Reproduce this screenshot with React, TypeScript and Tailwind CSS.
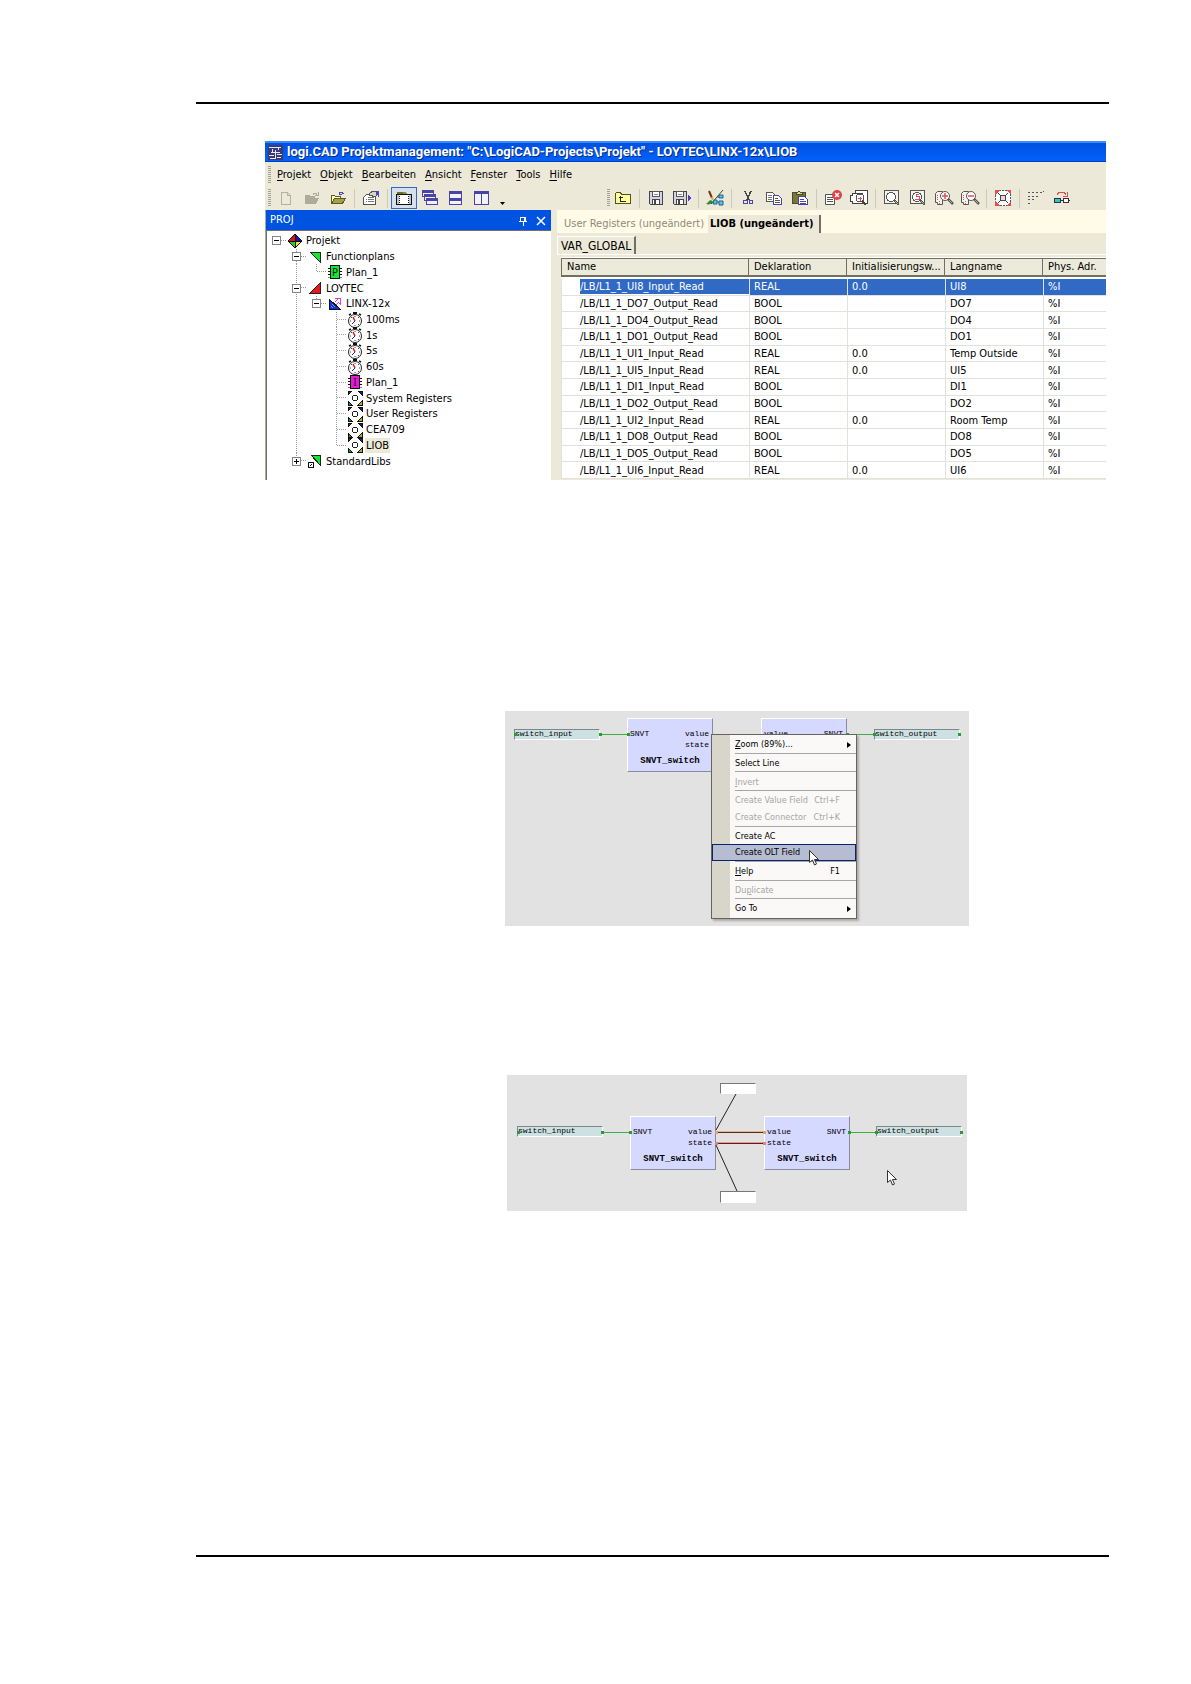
import type { ReactNode } from 'react';
import clsx from 'clsx';

const UI_FONT = "font-['DejaVu_Sans_Condensed','DejaVu_Sans',sans-serif]";
const MONO_FONT = "font-['Liberation_Mono',monospace]";

/* ---------- toolbar icons ---------- */

const Icon = ({ children, className }: { children: ReactNode; className?: string }) => (
  <svg viewBox="0 0 16 16" className={clsx('h-4 w-4 shrink-0', className)} fill="none" shapeRendering="crispEdges">
    {children}
  </svg>
);

const NewIcon = () => (
  <Icon>
    <path d="M3.5 2.5h6l3 3v9h-9z M9.5 2.5v3h3" stroke="#b4b1a3" />
  </Icon>
);

const OpenGrayIcon = () => (
  <Icon>
    <path d="M1 5h4l1 1h5v2h4l-3 6H1z" fill="#aeab9d" />
    <path d="M9 4.5c1-2 3-2 4 0M14 2v3h-3" stroke="#aeab9d" />
  </Icon>
);

const OpenIcon = () => (
  <Icon>
    <path d="M1.5 13.5v-8h3l1 1h5v2" fill="#ffffc0" stroke="#5c5a20" />
    <path d="M1.5 13.5l3-5h11l-3 5z" fill="#a2a04a" stroke="#5c5a20" />
    <path d="M13.5 4c-1-2-3-2-4 0M9 2v2h3" stroke="#4a45a8" />
  </Icon>
);

const PropertiesIcon = () => (
  <Icon>
    <path d="M.5 7.5l3-3h9v10h-12z" fill="#fff" stroke="#555" />
    <path d="M5 7.5h6M3 9.5h1M5 9.5h6M3 11.5h1M5 11.5h6" stroke="#777" />
    <path d="M6 4l4-3h3v5l-3 1-1-2-3 1z" fill="#d8d5c8" stroke="#555" />
    <path d="M13 1h3v6h-1V5h-2z" fill="#4a45b0" />
  </Icon>
);

const ProjectPaneIcon = () => (
  <Icon>
    <path d="M1 2h5l1 1v2H1z" fill="#6b7018" />
    <path d="M7 2l2 0 2 2h4v2H7z" fill="#8a8d40" />
    <rect x="0" y="4" width="16" height="11" fill="#111" />
    <rect x="1" y="5" width="2" height="9" fill="#b9c4cd" />
    <rect x="4" y="5" width="8" height="9" fill="#fff" />
    <rect x="13" y="5" width="2" height="9" fill="#b9c4cd" />
    <path d="M3.5 5v9M12.5 5v9" stroke="#fff" strokeDasharray="1 1" />
  </Icon>
);

const CascadeIcon = () => (
  <Icon>
    {[
      [0, 0],
      [2, 4],
      [4, 8],
    ].map(([x, y]) => (
      <g key={x}>
        <rect x={x + 0.5} y={y + 0.5} width="11" height="6" fill="#f0f0fa" stroke="#4845a5" />
        <rect x={x} y={y} width="12" height="3" fill="#4845a5" />
      </g>
    ))}
  </Icon>
);

const TileRowsIcon = () => (
  <Icon>
    <rect x="1.5" y="1.5" width="12" height="13" fill="#f2f2fa" stroke="#4845a5" />
    <path d="M1 1h13v3H1zM1 8h13v3H1z" fill="#4845a5" />
  </Icon>
);

const TileColumnsIcon = () => (
  <Icon>
    <rect x=".5" y="1.5" width="14" height="13" fill="#f2f2fa" stroke="#4845a5" />
    <path d="M0 1h15v3H0zM7 1h1v14H7z" fill="#4845a5" />
  </Icon>
);

const FolderUpIcon = () => (
  <Icon>
    <path d="M.5 13.5v-10l1-1h4l1 2h9v9z" fill="#ffff9c" stroke="#55531c" />
    <path d="M5.5 6v5h5M3.5 7.5h4" stroke="#222" />
  </Icon>
);

const Floppy = () => (
  <>
    <path d="M1.5 1.5h13v13h-12l-1-1z" fill="#d6d4e4" stroke="#444" />
    <rect x="4.5" y="1.5" width="7" height="5" fill="#fff" stroke="#555" />
    <rect x="4.5" y="9.5" width="7" height="5" fill="#fff" stroke="#444" />
    <rect x="6" y="10" width="2" height="4" fill="#444" />
    <path d="M6 4.5h4" stroke="#888" />
  </>
);

const SaveIcon = () => (
  <Icon>
    <Floppy />
  </Icon>
);

const SaveAsIcon = () => (
  <svg viewBox="0 0 20 16" className="h-4 w-5" fill="none" shapeRendering="crispEdges">
    <Floppy />
    <path d="M16 5l4 3-4 3z" fill="#4a3fc0" />
  </svg>
);

const DrawIcon = () => (
  <svg viewBox="0 0 18 16" className="h-4 w-[18px]" fill="none">
    <path d="M3 1l3 7" stroke="#8a2a1a" strokeWidth="2" />
    <path d="M6 7l1 3" stroke="#c8c020" strokeWidth="2" />
    <path d="M0 14c2-1 3-4 5-4l2 2c-2 2-4 3-7 2z" fill="#2f8a3a" />
    <path d="M17 0L5 14" stroke="#444" />
    <path d="M8 10h3v4H7zM13 5h4v3h-4zM13 11h4v4h-4z" fill="#58c6ea" stroke="#20608a" />
    <path d="M11 12h2M11 7h2" stroke="#20608a" />
  </svg>
);

const CutIcon = () => (
  <Icon>
    <path d="M5 1l4 9M11 1L7 10" stroke="#444" strokeWidth="1.5" />
    <circle cx="5.5" cy="12" r="2" stroke="#4a45a8" />
    <circle cx="11" cy="12" r="2" stroke="#4a45a8" />
  </Icon>
);

const CopyIcon = () => (
  <Icon>
    <path d="M.5 2.5h6l2 2v7h-8z" fill="#fff" stroke="#555" />
    <path d="M2 5.5h4M2 7.5h4M2 9.5h4" stroke="#777" />
    <path d="M7.5 5.5h5l3 3v6h-8z" fill="#fff" stroke="#4a45a8" />
    <path d="M9 8.5h3M9 10.5h5M9 12.5h5" stroke="#555" />
  </Icon>
);

const PasteIcon = () => (
  <Icon>
    <rect x=".5" y="2.5" width="13" height="11" fill="#77753c" stroke="#4b4a2a" />
    <path d="M4 4V2h2l1-1 1 1h2v2z" fill="#e8e070" stroke="#444" />
    <path d="M6.5 6.5h6l3 3v5h-9z" fill="#fff" stroke="#4a45a8" />
    <path d="M8 9.5h4M8 11.5h6M8 13h6" stroke="#4a45a8" />
  </Icon>
);

const DeleteEntryIcon = () => (
  <svg viewBox="0 0 18 16" className="h-4 w-[18px]" fill="none">
    <path d="M1.5 4.5h9v10h-9z" fill="#fff" stroke="#555" />
    <path d="M3 7.5h6M3 9.5h6M3 11.5h6" stroke="#555" />
    <circle cx="13" cy="5" r="5" fill="#e04048" />
    <path d="M11 3l4 4M15 3l-4 4" stroke="#fff" strokeWidth="1.5" />
  </svg>
);

const PreviewIcon = () => (
  <svg viewBox="0 0 18 16" className="h-4 w-[18px]" fill="none" shapeRendering="crispEdges">
    <path d="M5.5 3.5v-3h12v13h-3" fill="#fff" stroke="#444" />
    <path d="M2.5 3.5h10v10h-10v-2h-2v-6h2z" fill="#fff" stroke="#444" />
    <circle cx="10" cy="8" r="4" fill="#fff" stroke="#555" />
    <path d="M8 8.5h4M10 6.5v4" stroke="#e05058" />
    <path d="M12 11l4 4" stroke="#444" strokeWidth="2" />
  </svg>
);

const Lens = ({ cx, cy }: { cx: number; cy: number }) => (
  <>
    <circle cx={cx} cy={cy} r="4.5" fill="#fff" stroke="#555" />
    <path d={`M${cx + 3} ${cy + 3}l5 5`} stroke="#555" strokeWidth="2.5" />
    <path d={`M${cx + 4} ${cy + 4}l3 3`} stroke="#aaa" />
  </>
);

const ZoomWindowIcon = () => (
  <Icon>
    <path d="M.5.5h14v13H.5z" fill="#f4f3ec" stroke="#555" />
    <Lens cx={7} cy={7} />
  </Icon>
);

const ZoomSelectionIcon = () => (
  <Icon>
    <path d="M.5.5h14v13H.5z" fill="#f4f3ec" stroke="#555" />
    <Lens cx={7} cy={7} />
    <path d="M9 4.5H6v2h3v3H5" stroke="#e05058" />
  </Icon>
);

const ZoomPage = () => (
  <>
    <path d="M.5 3.5l2-2h5v13h-5v-2h-2z" fill="#f4f3ec" stroke="#555" />
    <path d="M2.5 5v6M4.5 11v3" stroke="#e05058" strokeDasharray="1 1" />
  </>
);

const ZoomInIcon = () => (
  <svg viewBox="0 0 19 16" className="h-4 w-[19px]" fill="none">
    <ZoomPage />
    <Lens cx={10} cy={6} />
    <path d="M7 6h6M10 3v6" stroke="#e05058" strokeWidth="1.5" />
  </svg>
);

const ZoomOutIcon = () => (
  <svg viewBox="0 0 19 16" className="h-4 w-[19px]" fill="none">
    <ZoomPage />
    <Lens cx={10} cy={6} />
    <path d="M7 6h6" stroke="#e05058" strokeWidth="1.5" />
  </svg>
);

const FitIcon = () => (
  <Icon>
    <rect x=".5" y=".5" width="15" height="15" fill="#fff" stroke="#555" strokeDasharray="2 1" />
    <path d="M0 0h5L0 5zM16 0v5l-5-5zM0 16v-5l5 5zM16 16h-5l5-5z" fill="#e05058" />
    <rect x="5.5" y="5.5" width="5" height="5" fill="#e8d8d8" stroke="#444" />
    <path d="M3 3l2 2M13 3l-2 2M3 13l2-2M13 13l-2-2" stroke="#444" />
  </Icon>
);

const GridDotsIcon = () => (
  <Icon>
    <path
      d="M0 2h2v1H0zM4 2h2v1H4zM8 2h2v1H8zM12 2h2v1h-2zM15 1h1v1h-1zM0 6h2v1H0zM4 6h2v1H4zM8 6h2v1H8zM0 9h2v1H0zM4 9h2v1H4zM0 13h2v1H0z"
      fill="#555"
    />
  </Icon>
);

const RelinkIcon = () => (
  <Icon>
    <path d="M3 5c2-4 7-4 9 0M13 2v4H9" stroke="#e05058" />
    <rect x=".5" y="8.5" width="6" height="4" fill="#28c8d0" stroke="#333" />
    <rect x="9.5" y="8.5" width="5" height="4" fill="#fff" stroke="#333" />
    <path d="M7 10.5h2M15 10.5h1" stroke="#333" />
  </Icon>
);

/* ---------- toolbar ---------- */

interface ToolButton {
  label: string;
  icon: ReactNode;
  active?: boolean;
}

const fileTools: ToolButton[][] = [
  [
    { label: 'New', icon: <NewIcon /> },
    { label: 'Open', icon: <OpenGrayIcon /> },
    { label: 'Open project', icon: <OpenIcon /> },
  ],
  [{ label: 'Properties', icon: <PropertiesIcon /> }],
  [
    { label: 'Project pane', icon: <ProjectPaneIcon />, active: true },
    { label: 'Cascade', icon: <CascadeIcon /> },
    { label: 'Tile rows', icon: <TileRowsIcon /> },
    { label: 'Tile columns', icon: <TileColumnsIcon /> },
  ],
];

const editTools: ToolButton[][] = [
  [{ label: 'Up', icon: <FolderUpIcon /> }],
  [
    { label: 'Save', icon: <SaveIcon /> },
    { label: 'Save as', icon: <SaveAsIcon /> },
  ],
  [{ label: 'Draw', icon: <DrawIcon /> }],
  [
    { label: 'Cut', icon: <CutIcon /> },
    { label: 'Copy', icon: <CopyIcon /> },
    { label: 'Paste', icon: <PasteIcon /> },
  ],
  [
    { label: 'Delete entry', icon: <DeleteEntryIcon /> },
    { label: 'Preview', icon: <PreviewIcon /> },
  ],
  [
    { label: 'Zoom window', icon: <ZoomWindowIcon /> },
    { label: 'Zoom selection', icon: <ZoomSelectionIcon /> },
    { label: 'Zoom in', icon: <ZoomInIcon /> },
    { label: 'Zoom out', icon: <ZoomOutIcon /> },
  ],
  [{ label: 'Fit', icon: <FitIcon /> }],
  [
    { label: 'Grid', icon: <GridDotsIcon /> },
    { label: 'Relink', icon: <RelinkIcon /> },
  ],
];

const Grip = () => (
  <svg className="h-[18px] w-[3px] shrink-0" shapeRendering="crispEdges">
    <path d="M1.5 0v18" stroke="#a5a294" strokeWidth="3" strokeDasharray="1 1" />
  </svg>
);

const ToolGroups = ({ groups }: { groups: ToolButton[][] }) => (
  <div className="flex items-center">
    {groups.map((group, i) => (
      <div key={i} className="flex items-center">
        {i > 0 && <span className="mx-[3px] h-[19px] w-px bg-[#cdcab9]" />}
        {group.map((tool) => (
          <button
            key={tool.label}
            aria-label={tool.label}
            className={clsx(
              'flex h-[22px] w-[26px] items-center justify-center',
              tool.active && 'border border-[#316ac5] bg-[#d5e0ec]'
            )}
          >
            {tool.icon}
          </button>
        ))}
      </div>
    ))}
  </div>
);

/* ---------- project tree ---------- */

const DiamondIcon = () => (
  <Icon>
    <path d="M8 1v7H1z" fill="#e01010" />
    <path d="M8 1v7h7z" fill="#1010c8" />
    <path d="M8 15V8H1z" fill="#20d020" />
    <path d="M8 15V8h7z" fill="#f0e820" />
    <path d="M8 1l7 7-7 7-7-7zM8 1v14M1 8h14" stroke="#111" />
  </Icon>
);

const GreenFlagIcon = () => (
  <Icon>
    <path d="M3 3h10v10z" fill="#12e832" stroke="#222" />
  </Icon>
);

const RedFlagIcon = () => (
  <Icon>
    <path d="M13 3v10H3z" fill="#e81818" stroke="#222" />
  </Icon>
);

const DeviceIcon = () => (
  <Icon>
    <path d="M2 3v10h11z" fill="#1030d8" stroke="#111" />
    <path d="M7.5 2.5h6v6l-2-2-3 3M11 3l-3 3" stroke="#e040d0" />
    <path d="M5 8l3 3M4 10l2 2" stroke="#6f9cff" />
  </Icon>
);

const ClockIcon = () => (
  <svg viewBox="0 0 16 16" className="h-4 w-4 shrink-0" fill="none">
    <circle cx="8" cy="9" r="6.5" fill="#fff" stroke="#222" />
    <path d="M6 0h4v2H6z" fill="#111" />
    <path d="M2 3l2-1M14 3l-2-1" stroke="#111" strokeWidth="1.5" />
    <path d="M8 4v1M8 13v1M3 9h1M12 9h1M5 6l-1-1M11 6l1-1M11 12l1 1" stroke="#444" />
    <path d="M8 9L6 5" stroke="#d02020" strokeWidth="1.5" />
    <path d="M8 9l-3 3" stroke="#2020c0" />
  </svg>
);

const ChipIcon = ({ letter, fill }: { letter: string; fill: string }) => (
  <Icon>
    <path d="M1 4.5h14M1 7.5h14M1 10.5h14" stroke="#111" />
    <path d="M1 13.5h14" stroke="#888" />
    <rect x="3.5" y="1.5" width="9" height="13" fill={fill} stroke="#111" />
    <text x="8" y="12" textAnchor="middle" fontSize="10" fontFamily="Noto Sans, sans-serif" fill="#111">
      {letter}
    </text>
  </Icon>
);

const RegisterIcon = () => (
  <Icon>
    <path d="M1 1h4L1 5z" fill="#a01818" stroke="#111" />
    <path d="M11 1h4v4z" fill="#1818a0" stroke="#111" />
    <path d="M1 11v4h4z" fill="#18a018" stroke="#111" />
    <path d="M11 15h4v-4z" fill="#b0b018" stroke="#111" />
    <path d="M6.5 5.5h3l1 1v3l-1 1h-3l-1-1v-3z" stroke="#222" />
  </Icon>
);

const LibIcon = () => (
  <Icon>
    <path d="M4 2h9v10z" fill="#12e832" stroke="#222" />
    <rect x="1.5" y="9.5" width="5" height="5" fill="#fff" stroke="#111" />
    <path d="M3 13l2-2" stroke="#111" />
  </Icon>
);

// guides: one character per column; "|" runs through, "+" branches, "L" ends, "-" only leads to the icon
interface TreeNode {
  label: string;
  icon: ReactNode;
  guides: string;
  box?: '+' | '−';
  selected?: boolean;
}

const treeNodes: TreeNode[] = [
  { label: 'Projekt', icon: <DiamondIcon />, guides: '-', box: '−' },
  { label: 'Functionplans', icon: <GreenFlagIcon />, guides: ' +', box: '−' },
  { label: 'Plan_1', icon: <ChipIcon letter="P" fill="#12e832" />, guides: ' |L' },
  { label: 'LOYTEC', icon: <RedFlagIcon />, guides: ' +', box: '−' },
  { label: 'LINX-12x', icon: <DeviceIcon />, guides: ' |L', box: '−' },
  { label: '100ms', icon: <ClockIcon />, guides: ' | +' },
  { label: '1s', icon: <ClockIcon />, guides: ' | +' },
  { label: '5s', icon: <ClockIcon />, guides: ' | +' },
  { label: '60s', icon: <ClockIcon />, guides: ' | +' },
  { label: 'Plan_1', icon: <ChipIcon letter="I" fill="#e818d8" />, guides: ' | +' },
  { label: 'System Registers', icon: <RegisterIcon />, guides: ' | +' },
  { label: 'User Registers', icon: <RegisterIcon />, guides: ' | +' },
  { label: 'CEA709', icon: <RegisterIcon />, guides: ' | +' },
  { label: 'LIOB', icon: <RegisterIcon />, guides: ' | L', selected: true },
  { label: 'StandardLibs', icon: <LibIcon />, guides: ' L', box: '+' },
];

const Guide = ({ kind }: { kind: string }) => (
  <svg className="h-full w-5" stroke="#9a9a9a" strokeDasharray="1 1" shapeRendering="crispEdges">
    {'|+L'.includes(kind) && <line x1="9.5" y1="0" x2="9.5" y2="50%" />}
    {'|+'.includes(kind) && <line x1="9.5" y1="50%" x2="9.5" y2="100%" />}
    {'+L-'.includes(kind) && <line x1="10" y1="50%" x2="20" y2="50%" />}
  </svg>
);

const ProjectTree = () => (
  <ul className="grid h-[236px] auto-rows-fr">
    {treeNodes.map((node, i) => (
      <li key={i} className="flex min-h-0 items-center">
        {node.guides.split('').map((kind, col) => (
          <span key={col} className="relative h-full w-5">
            {kind !== ' ' && <Guide kind={kind} />}
            {node.box && col === node.guides.length - 1 && (
              <button
                aria-label={`Toggle ${node.label}`}
                className="absolute inset-y-0 left-[5px] my-auto flex h-[9px] w-[9px] items-center justify-center border border-[#848484] bg-white"
              >
                <span className="h-px w-[5px] bg-black" />
                {node.box === '+' && <span className="absolute h-[5px] w-px bg-black" />}
              </button>
            )}
          </span>
        ))}
        {node.icon}
        <button className={clsx('ml-0.5 px-px leading-[15px]', node.selected && 'bg-[#ece9d8]')}>{node.label}</button>
      </li>
    ))}
  </ul>
);

const ProjectPane = () => (
  <div className="flex w-[286px] shrink-0 flex-col border-l border-[#aca899]">
    <div className="flex h-5 items-center bg-[#0053e1] pt-px pl-1 text-white">
      <span className="flex-1">PROJ</span>
      <button aria-label="Pin" className="mr-2">
        <svg viewBox="0 0 10 10" className="h-[10px] w-[10px]" stroke="#fff" fill="none" shapeRendering="crispEdges">
          <path d="M2.5 1v4M6.5 1v4M7.5 1v4M2 1.5h6M1 5.5h8M5 6v4" />
        </svg>
      </button>
      <button aria-label="Close" className="mr-[5px]">
        <svg viewBox="0 0 10 10" className="h-[10px] w-[10px]" stroke="#fff" strokeWidth="1.5">
          <path d="M1 1l8 8M9 1L1 9" />
        </svg>
      </button>
    </div>
    <div className="flex-1 overflow-hidden border-t border-l border-[#716f64] bg-white pt-0.5">
      <ProjectTree />
    </div>
  </div>
);

/* ---------- register table ---------- */

const columns = ['Name', 'Deklaration', 'Initialisierungsw...', 'Langname', 'Phys. Adr.'];

const rows = [
  ['/LB/L1_1_UI8_Input_Read', 'REAL', '0.0', 'UI8', '%I'],
  ['/LB/L1_1_DO7_Output_Read', 'BOOL', '', 'DO7', '%I'],
  ['/LB/L1_1_DO4_Output_Read', 'BOOL', '', 'DO4', '%I'],
  ['/LB/L1_1_DO1_Output_Read', 'BOOL', '', 'DO1', '%I'],
  ['/LB/L1_1_UI1_Input_Read', 'REAL', '0.0', 'Temp Outside', '%I'],
  ['/LB/L1_1_UI5_Input_Read', 'REAL', '0.0', 'UI5', '%I'],
  ['/LB/L1_1_DI1_Input_Read', 'BOOL', '', 'DI1', '%I'],
  ['/LB/L1_1_DO2_Output_Read', 'BOOL', '', 'DO2', '%I'],
  ['/LB/L1_1_UI2_Input_Read', 'REAL', '0.0', 'Room Temp', '%I'],
  ['/LB/L1_1_DO8_Output_Read', 'BOOL', '', 'DO8', '%I'],
  ['/LB/L1_1_DO5_Output_Read', 'BOOL', '', 'DO5', '%I'],
  ['/LB/L1_1_UI6_Input_Read', 'REAL', '0.0', 'UI6', '%I'],
];

const RegisterTable = () => (
  <table className="h-[222px] w-full table-fixed border-separate border-spacing-0 bg-white text-left whitespace-nowrap">
    <colgroup>
      <col className="w-[188px]" />
      <col className="w-[98px]" />
      <col className="w-[98px]" />
      <col className="w-[98px]" />
      <col />
    </colgroup>
    <thead>
      <tr className="h-[22px]">
        {columns.map((column) => (
          <th key={column} className="group p-0 pb-0.5 font-normal">
            <div className="border-t border-r border-b-2 border-[#716f64] bg-[#ebeadb] pl-[5px] leading-[16px] group-first:border-l group-last:border-r-0">
              {column}
            </div>
          </th>
        ))}
      </tr>
    </thead>
    <tbody>
      {rows.map((row, r) => (
        <tr key={row[0]}>
          {row.map((cell, c) => (
            <td
              key={c}
              className={clsx(
                'border-b border-l border-[#e2e1dc] p-0 leading-[15px]',
                c === 0 ? 'pl-[18px]' : 'pl-1',
                r === 0 && c > 0 && 'bg-[#316ac5] text-white'
              )}
            >
              {r === 0 && c === 0 ? <span className="block bg-[#316ac5] text-white">{cell}</span> : cell}
            </td>
          ))}
        </tr>
      ))}
    </tbody>
  </table>
);

const EditorPane = () => (
  <div className="flex min-w-0 flex-1 flex-col pl-[6px]">
    <div className="flex h-[23px] items-end bg-[#fffbe6] pl-[7px]">
      <button className="h-[18px] pt-px pr-1 text-[#8d8a7c]">User Registers (ungeändert)</button>
      <button className="h-[18px] border-r-2 border-[#716f64] bg-[#ece9d8] pt-px pr-1.5 pl-0.5 font-bold">
        LIOB (ungeändert)
      </button>
    </div>
    <div className="flex h-[22px] items-end border-b border-white">
      <button className="h-[18px] border-t border-r-2 border-l border-t-white border-r-[#716f64] border-l-white px-[3px] pt-px text-xs leading-[16px]">
        VAR_GLOBAL
      </button>
    </div>
    <div className="mt-0.5 ml-1">
      <RegisterTable />
    </div>
  </div>
);

const menus = ['Projekt', 'Objekt', 'Bearbeiten', 'Ansicht', 'Fenster', 'Tools', 'Hilfe'];

const LogiCadWindow = () => (
  <section className={clsx('mt-[37px] mr-[3px] ml-[69px] h-[339px] overflow-hidden bg-[#ece9d8] text-[11px] text-black', UI_FONT)}>
    <header className="flex h-[21px] items-center gap-1 border-t-2 border-b border-t-[#3a8bff] border-b-[#0040c0] bg-linear-to-b from-[#0050e0] to-[#0062fa] pl-[3px]">
      <svg viewBox="0 0 15 15" className="h-[15px] w-[15px]" fill="none" shapeRendering="crispEdges">
        <rect width="15" height="15" fill="#3b3a78" />
        <path d="M1 2.5h12M4 4v3M10 3v2M3 7.5h9M7 5v8M9 9.5h5M9 12.5h4M1 10.5h5M2 13.5h6" stroke="#e8e8f4" />
      </svg>
      <h1 className="font-['Roboto',sans-serif] text-[13px] leading-[18px] font-bold whitespace-nowrap text-white [text-shadow:1px_1px_#0a2a80]">
        logi.CAD Projektmanagement: "C:\LogiCAD-Projects\Projekt" - LOYTEC\LINX-12x\LIOB
      </h1>
    </header>
    <nav className="flex h-6 items-center pt-0.5 pl-[3px]">
      <Grip />
      <div className="ml-1.5 flex gap-[9px]">
        {menus.map((menu) => (
          <button key={menu}>
            <span className="underline underline-offset-2">{menu[0]}</span>
            {menu.slice(1)}
          </button>
        ))}
      </div>
    </nav>
    <div className="flex h-6 items-center pl-[3px]">
      <Grip />
      <div className="ml-0.5">
        <ToolGroups groups={fileTools} />
      </div>
      <button aria-label="More" className="mt-[10px] ml-[5px]">
        <svg viewBox="0 0 5 3" className="h-[3px] w-[5px]">
          <path d="M0 0h5L2.5 3z" />
        </svg>
      </button>
      <div className="ml-[102px] flex items-center">
        <Grip />
        <ToolGroups groups={editTools} />
      </div>
    </div>
    <div className="flex h-[270px]">
      <ProjectPane />
      <EditorPane />
    </div>
  </section>
);

/* ---------- function plan figures ---------- */

const Cursor = ({ className }: { className: string }) => (
  <svg viewBox="0 0 10 16" className={clsx('absolute h-4 w-[10px]', className)}>
    <path d="M.5.5v12l3-2.5 2 5 2-1-2-4.500h4z" fill="#fff" stroke="#333" />
  </svg>
);

interface BlockProps {
  className: string;
  left: string[];
  right: string[];
  title?: string;
}

const Block = ({ className, left, right, title }: BlockProps) => (
  <div
    className={clsx(
      'absolute h-[54px] w-[86px] border border-t-white border-r-[#8a8a98] border-b-[#8a8a98] border-l-white bg-[#d6d9ff] pt-[9px]',
      className
    )}
  >
    <div className="flex justify-between pr-[3px] pl-0.5">
      {[left, right].map((pins, i) => (
        <div key={i} className="h-6 text-[8px] leading-[11px]">
          {pins.map((pin) => (
            <div key={pin}>{pin}</div>
          ))}
        </div>
      ))}
    </div>
    {title && <div className="text-center text-[9px] leading-[18px] font-bold">{title}</div>}
  </div>
);

const Terminal = ({ className, children }: { className: string; children: string }) => (
  <div
    className={clsx(
      'absolute h-[11px] w-[86px] border border-t-[#7a8a8a] border-r-white border-b-white border-l-[#7a8a8a] bg-[#cde0e2] text-[8px] leading-[8px]',
      className
    )}
  >
    {children}
  </div>
);

const Wire = ({ x1, x2, y }: { x1: number; x2: number; y: number }) => (
  <g>
    <path d={`M${x1} ${y + 0.5}H${x2}`} stroke="#3fae49" />
    <path d={`M${x1 - 1} ${y - 1}h3v3h-3zM${x2 - 1} ${y - 1}h3v3h-3z`} fill="#2a9a34" />
  </g>
);

type MenuEntry = { label: string; hot?: number; shortcut?: string; submenu?: boolean; disabled?: boolean; active?: boolean } | null;

const contextMenu: MenuEntry[] = [
  { label: 'Zoom (89%)...', hot: 0, submenu: true },
  null,
  { label: 'Select Line' },
  null,
  { label: 'Invert', hot: 0, disabled: true },
  null,
  { label: 'Create Value Field', shortcut: 'Ctrl+F', disabled: true },
  { label: 'Create Connector', shortcut: 'Ctrl+K', disabled: true },
  null,
  { label: 'Create AC' },
  { label: 'Create OLT Field', active: true },
  null,
  { label: 'Help', hot: 0, shortcut: 'F1' },
  null,
  { label: 'Duplicate', hot: 2, disabled: true },
  null,
  { label: 'Go To', submenu: true },
];

const MenuLabel = ({ label, hot }: { label: string; hot?: number }) =>
  hot === undefined ? (
    <>{label}</>
  ) : (
    <>
      {label.slice(0, hot)}
      <span className="underline">{label[hot]}</span>
      {label.slice(hot + 1)}
    </>
  );

const ContextMenu = () => (
  <div
    className={clsx(
      'absolute top-[23px] left-[206px] flex h-[185px] w-[146px] flex-col border border-[#66645c] bg-linear-to-r from-[#d8d5cb] from-[18px] to-[#faf9f7] to-[18px] py-px text-[9px] shadow-[2px_2px_2px_#aaa]',
      UI_FONT
    )}
  >
    {contextMenu.map((entry, i) =>
      entry === null ? (
        <div key={i} className="ml-[23px] h-[2px] border-t border-[#a6a6a6]" />
      ) : (
        <button
          key={entry.label}
          disabled={entry.disabled}
          className={clsx(
            'relative flex min-h-0 flex-1 items-center border pt-px pr-[15px] pl-[22px] text-left',
            entry.active ? 'border-[#0a246a] bg-[#b6bdd2]' : 'border-transparent',
            entry.disabled ? 'text-[#a6a6a6]' : 'text-black'
          )}
        >
          <span className="flex-1 whitespace-nowrap">
            <MenuLabel label={entry.label} hot={entry.hot} />
          </span>
          {entry.shortcut}
          {entry.submenu && (
            <svg viewBox="0 0 4 6" className="absolute right-1 h-[6px] w-1">
              <path d="M0 0l4 3-4 3z" />
            </svg>
          )}
        </button>
      )
    )}
  </div>
);

const MenuFigure = () => (
  <section className={clsx('relative mt-[231px] ml-[309px] h-[215px] w-[464px] bg-[#e2e2e2] text-black', MONO_FONT)}>
    <Block className="top-[7px] left-[122px]" left={['SNVT']} right={['value', 'state']} title="SNVT_switch" />
    <Block className="top-[7px] left-[256px]" left={['value']} right={['SNVT']} />
    <Terminal className="top-[18px] left-[9px]">switch_input</Terminal>
    <Terminal className="top-[18px] left-[369px]">switch_output</Terminal>
    <svg className="absolute inset-0 h-full w-full" fill="none" shapeRendering="crispEdges">
      <Wire x1={95} x2={123} y={23} />
      <Wire x1={342} x2={369} y={23} />
      <path d="M9 22h3v3H9zM453 22h3v3h-3z" fill="#2a9a34" />
    </svg>
    <ContextMenu />
    <Cursor className="top-[139px] left-[304px]" />
  </section>
);

const FieldFigure = () => (
  <section className={clsx('relative mt-[149px] ml-[311px] h-[136px] w-[460px] bg-[#e2e2e2] text-black', MONO_FONT)}>
    <Block className="top-[41px] left-[123px]" left={['SNVT']} right={['value', 'state']} title="SNVT_switch" />
    <Block className="top-[41px] left-[257px]" left={['value', 'state']} right={['SNVT']} title="SNVT_switch" />
    <Terminal className="top-[51px] left-[10px]">switch_input</Terminal>
    <Terminal className="top-[51px] left-[369px]">switch_output</Terminal>
    <svg className="absolute inset-0 h-full w-full" fill="none">
      <g shapeRendering="crispEdges">
        <Wire x1={95} x2={123} y={57} />
        <Wire x1={342} x2={369} y={57} />
        <path d="M10 56h3v3h-3zM453 56h3v3h-3z" fill="#2a9a34" />
        <path d="M209 56.5h48" stroke="#e0b890" />
        <path d="M209 57.5h48" stroke="#5a2a1a" />
        <path d="M209 67.5h48" stroke="#e09a9a" />
        <path d="M209 68.5h48" stroke="#6a1a1a" />
        <path d="M208 56h3v3h-3zM256 56h3v3h-3z" fill="#e0a060" />
        <path d="M208 67h3v3h-3zM256 67h3v3h-3z" fill="#e08080" />
      </g>
      <path d="M209 55l20-36M209 70l21 46" stroke="#222" />
    </svg>
    <input
      aria-label="Value field"
      className="absolute top-[8px] left-[213px] h-[11px] w-9 border border-t-[#777] border-r-white border-b-white border-l-[#777] bg-white"
    />
    <input
      aria-label="State field"
      className="absolute top-[116px] left-[213px] h-[12px] w-9 border border-t-[#777] border-r-white border-b-white border-l-[#777] bg-white"
    />
    <Cursor className="top-[95px] left-[380px]" />
  </section>
);

export default function App() {
  return (
    <main className="bg-white pt-[102px] pr-[82px] pb-[127px] pl-[196px]">
      <hr className="h-[2px] border-0 bg-black" />
      <LogiCadWindow />
      <MenuFigure />
      <FieldFigure />
      <hr className="mt-[344px] h-[2px] border-0 bg-black" />
    </main>
  );
}
